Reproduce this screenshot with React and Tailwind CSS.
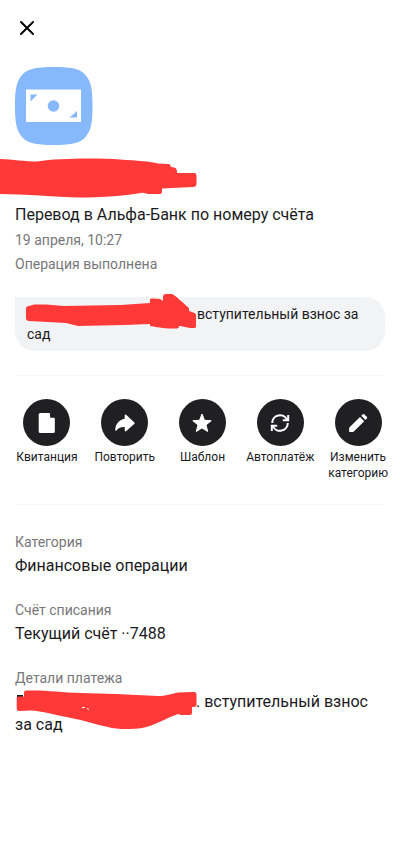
// ─── ICONS ──────────────────────────────────────────────
const IconClose = () => (
  <svg className="w-6 h-6" viewBox="0 0 24 24" fill="none" stroke="currentColor" strokeWidth={2}>
    <path strokeLinecap="round" d="M6 6l12 12M18 6L6 18" />
  </svg>
);

const IconBanknote = () => (
  <svg className="w-[78px] h-[78px]" viewBox="0 0 78 78">
    <path
      fill="#86b8fc"
      d="M39 0C58 0 65 2 70 7.500C76 14 77.500 22 77.500 39C77.500 56 76 64 70 70.500C65 76 57 78 39 78C20 78 13 76 7.500 70.500C1.500 64 0 56 0 39C0 22 1.500 14 7.500 7.500C13 2 20 0 39 0Z"
    />
    <path fill="#fff" d="M11 22.500h55v32.500h-55z" />
    <circle cx="38.500" cy="39" r="5.800" fill="#86b8fc" />
    <path fill="#86b8fc" d="M15.500 27.500h7L15.500 34.500zM62 50.500h-7.500l7.500-6.500z" />
  </svg>
);

const IconDocument = () => (
  <svg className="w-6 h-6" viewBox="0 0 24 24" fill="currentColor">
    <path d="M5.200 2H14a1 1 0 011 1v2.500a1.200 1.200 0 001.200 1.200h2.600a1 1 0 011 1v12.800a1.500 1.500 0 01-1.500 1.500H5.200A1.500 1.500 0 013.700 20.500v-17A1.500 1.500 0 015.200 2z" />
  </svg>
);

const IconForward = () => (
  <svg className="w-6 h-6" viewBox="0 0 24 24" fill="currentColor">
    <path d="M11.700 4.400c0-.8.8-1.100 1.400-.6l8.300 7.700c.4.400.4.900 0 1.300l-8.300 7.400c-.6.500-1.400.2-1.400-.6v-3.500c-3.900-.3-6.600.9-8.200 3.400-.4.600-1.200.4-1.200-.3C2.300 13.200 5.900 8.800 11.700 7.700z" />
  </svg>
);

const IconStar = () => (
  <svg className="w-6 h-6" viewBox="0 0 24 24" fill="currentColor">
    <path
      stroke="currentColor"
      strokeWidth={1}
      strokeLinejoin="round"
      d="M12 3l2.500 6.300 6.700.4-5.200 4.200 1.700 6.600L12 16.900l-5.700 3.600L8 13.900 2.800 9.700l6.700-.4z"
    />
  </svg>
);

const IconSync = () => (
  <svg className="w-6 h-6" viewBox="0 0 24 24" fill="none" stroke="currentColor" strokeWidth={2}>
    <path d="M4.200 12a7.800 7.800 0 0114.800-3.400M19.800 12A7.800 7.800 0 015 15.400" />
    <path d="M20.200 4v5.200h-5.400M3.800 20v-5.200h5.400" />
  </svg>
);

const IconPencil = () => (
  <svg className="w-6 h-6" viewBox="0 0 24 24" fill="currentColor">
    <path d="M14 6l4.200 4.200L7.800 20.500c-.3.300-.6.500-1 .5H3.800a.7.700 0 01-.7-.7v-3c0-.4.200-.7.500-1zM15.300 4.700l1.300-1.300c.5-.5 1.300-.5 1.800 0l2.400 2.400c.5.500.5 1.300 0 1.800l-1.300 1.300z" />
  </svg>
);

// ─── HIDDEN TEXT MARKS ──────────────────────────────────
const NameMark = () => (
  <svg className="block w-[197px] h-10" viewBox="0 0 197 40" aria-hidden="true">
    <path
      fill="#ff3838"
      d="M0 1C12 1.500 26 3.500 37 3.500C60 0 98 0 120 1.500C138 2.500 150 3.500 158 5.500L168 6C171 6 170 8 171 9L174 9.500C177 10 177 13 177 15L194 15C196 15 196.500 16 196.500 18V26C196.500 28 195 29 193 29L162 30.500V34C162 36 160 36 158 36H149C146 36 144 34 141 35C118 38.500 100 39.500 80 39.500C55 39 25 36 0 36Z"
    />
  </svg>
);

const CommentMark = () => (
  <svg className="w-[171px] h-9" viewBox="0 0 171 36" aria-hidden="true">
    <path
      fill="#ff3838"
      d="M0 15C0 13 1 12 3 12L8 10.500H20L38 12L95 11L124 9V6C124 4.500 125 4.500 127 4.500L134 5L137 7V3C137 1 138 0 140 0H146C149 1 158 10 163 14V17C166 18 170 19 170 21V32C170 34 169 34 167 34C160 34 157 32 153 32V33C152 35 150 34.500 148 34.500C140 35 130 33 124 32V30L98 31L52 32L40 29L3 27C1 27 0 26 0 24Z"
    />
  </svg>
);

const DetailsMark = () => (
  <svg className="w-[181px] h-10" viewBox="0 0 181 40" aria-hidden="true">
    <path fill="#1b1b1d" d="M1 5h6v3H1z" />
    <path
      fill="#ff3838"
      d="M.7 8C.7 7 1.500 6.500 3 6.500H8V3C8 1 9 .5 11 .5C30 0 45 2.500 65 3L100 4L142 6C150 6 155 4 162 2.500L178 2C180 2 180.500 3 180.500 5V15C180.500 17 178 17 176 17V23C176 25 174 25 172 25H165L162 24C150 28 138 36 126 38C115 39.500 100 39.500 92 37C80 35 68 30 55 28C40 25 25 21 15 20.500L3 21C1.500 21 .7 20 .7 18Z"
    />
    <path stroke="#fff" strokeWidth={1} fill="none" d="M66 17.500h3M71 18.500l2 1" />
  </svg>
);

// ─── DATA ───────────────────────────────────────────────
const actions = [
  { label: "Квитанция", Icon: IconDocument },
  { label: "Повторить", Icon: IconForward },
  { label: "Шаблон", Icon: IconStar },
  { label: "Автоплатёж", Icon: IconSync },
  { label: "Изменить категорию", Icon: IconPencil },
];

const Field = ({ label, children }) => (
  <div>
    <dt className="text-sm leading-[22px] text-[#77777a]">{label}</dt>
    <dd className="pt-px text-base leading-[23px]">{children}</dd>
  </div>
);

// ─── COMPONENT ──────────────────────────────────────────
export default function App() {
  return (
    <main className="min-h-screen bg-white font-[Roboto,sans-serif] text-[#1b1b1d]">
      <header className="px-[15px] pt-4">
        <button type="button" aria-label="Закрыть" className="block text-black">
          <IconClose />
        </button>
      </header>

      <section className="pt-[27px]">
        <div className="px-[15px]">
          <IconBanknote />
        </div>
        <div className="pt-[13px]">
          <NameMark />
        </div>
        <div className="px-[15px] pt-1">
          <h1 className="text-base leading-[26px]">Перевод в Альфа-Банк по номеру счёта</h1>
          <p className="text-sm leading-6 text-[#77777a]">19 апреля, 10:27</p>
          <p className="text-sm leading-6 text-[#77777a]">Операция выполнена</p>
        </div>
      </section>

      <div className="relative mx-[15px] mt-[21px] rounded-[20px] rounded-tl-none bg-[#f2f3f5] px-3 py-[7px] text-sm leading-5">
        <div className="absolute left-[11px] -top-[3px]">
          <CommentMark />
        </div>
        <p>
          <span className="inline-block w-[170px]" />
          вступительный взнос за сад
        </p>
      </div>

      <nav className="mt-6">
        <hr className="mx-[15px] border-[#f7f7f8]" />
        <div className="flex pl-2 pr-[3px] pt-[23px]">
          {actions.map(({ label, Icon }) => (
            <button key={label} type="button" className="flex flex-1 basis-0 flex-col items-center">
              <span className="flex w-[47px] h-[47px] items-center justify-center rounded-full bg-[#202022] text-white">
                <Icon />
              </span>
              <span className="mt-[3px] text-xs leading-4">{label}</span>
            </button>
          ))}
        </div>
        <hr className="mx-[15px] mt-[23px] border-[#f7f7f8]" />
      </nav>

      <dl className="mx-[15px] flex flex-col gap-[22px] pt-[26px] pb-6">
        <Field label="Категория">Финансовые операции</Field>
        <Field label="Счёт списания">Текущий счёт ··7488</Field>
        <Field label="Детали платежа">
          <span className="relative block">
            <span className="absolute left-px top-0">
              <DetailsMark />
            </span>
            <span className="inline-block w-[181px]" />. вступительный взнос за сад
          </span>
        </Field>
      </dl>
    </main>
  );
}
